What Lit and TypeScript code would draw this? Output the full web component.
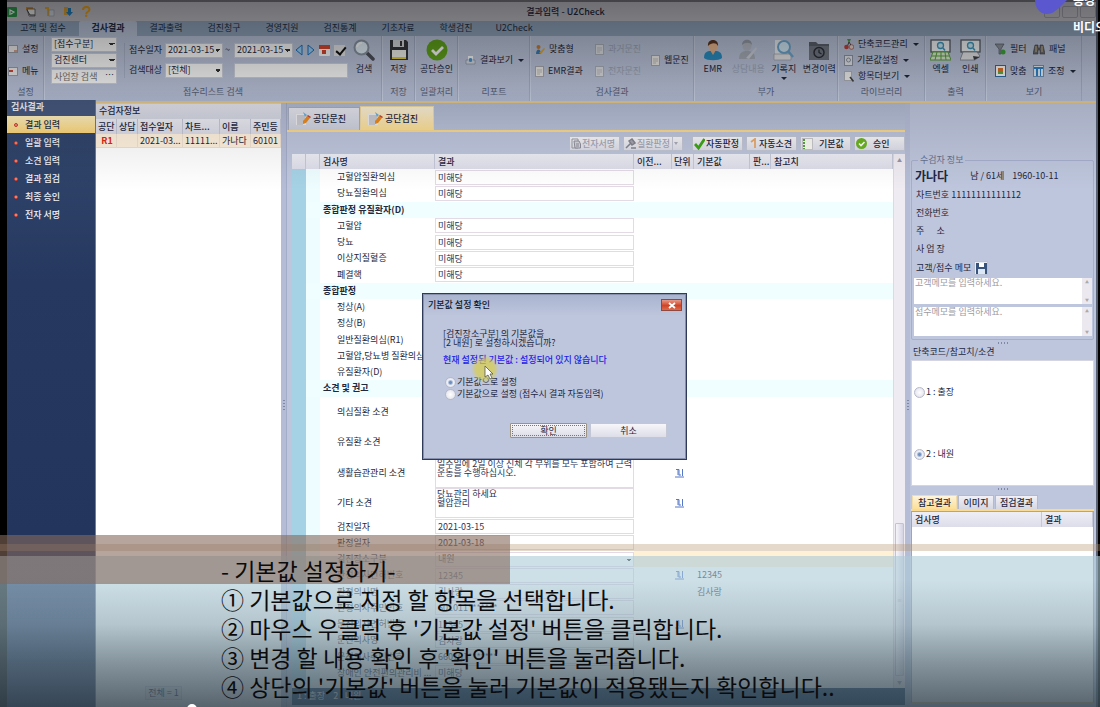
import { LitElement, html, css, svg, nothing } from "lit";
import { customElement } from "lit/decorators.js";
import { classMap } from "lit/directives/class-map.js";

type Row = {
  name: string;
  kind?: "section" | "tall" | "active";
  value?: string;
  link?: boolean;
  base?: string;
};

const ROWS: Row[] = [
  { name: "고혈압질환의심", value: "미해당" },
  { name: "당뇨질환의심", value: "미해당" },
  { name: "종합판정 유질환자(D)", kind: "section" },
  { name: "고혈압", value: "미해당" },
  { name: "당뇨", value: "미해당" },
  { name: "이상지질혈증", value: "미해당" },
  { name: "폐결핵", value: "미해당" },
  { name: "종합판정", kind: "section" },
  { name: "정상(A)", value: "" },
  { name: "정상(B)", value: "" },
  { name: "일반질환의심(R1)", value: "" },
  { name: "고혈압,당뇨병 질환의심", value: "" },
  { name: "유질환자(D)", value: "" },
  { name: "소견 및 권고", kind: "section" },
  { name: "의심질환 소견", kind: "tall", value: "" },
  { name: "유질환 소견", kind: "tall", value: "" },
  { name: "생활습관관리 소견", kind: "tall", value: "일주일에 2일 이상 신체 각 부위를 모두 포함하여 근력\n운동을 수행하십시오.", link: true },
  { name: "기타 소견", kind: "tall", value: "당뇨관리 하세요\n혈압관리", link: true },
  { name: "검진일자", value: "2021-03-15" },
  { name: "판정일자", value: "2021-03-18" },
  { name: "검진장소구분", kind: "active", value: "내원" },
  { name: "판정의사면허번호", value: "12345", link: true, base: "12345" },
  { name: "판정의사명", value: "김사랑", base: "김사랑" },
  { name: "판정의사주민번호", value: "601011*******" },
  { name: "문진의사면허번호", value: "12345", link: true },
  { name: "문진의사명", value: "김사랑" },
  { name: "문진의사주민번호", value: "660101*******" },
  { name: "장애인 안전편의관리비 ...", value: "미해당" },
];

const icon = (w: number, h: number, body: unknown, box = `0 0 ${w} ${h}`) =>
  html`<svg width=${w} height=${h} viewBox=${box} aria-hidden="true">${body}</svg>`;

const I = {
  app: icon(10, 10, svg`<rect width="10" height="10" rx="1" fill="#2c9a4b"/><path d="M3 8V3l4 2-3 2" fill="none" stroke="#fff" stroke-width="1.2"/>`),
  clip: icon(11, 11, svg`<path d="M1 1h7v3H1z" fill="#d98e26"/><path d="M2 3h8v7H4z" fill="#eee" stroke="#555" stroke-width=".8"/><path d="M2 4l3 5h5" fill="none" stroke="#444"/>`),
  ruler: icon(11, 11, svg`<path d="M1 1h4v9H3V3H1z" fill="#e2a72c"/><rect x="5" y="4" width="5" height="6" fill="#cfd6df" stroke="#8b96a6" stroke-width=".6"/>`),
  down: icon(10, 11, svg`<path d="M1 1h4v8H1z" fill="#e0a43a"/><path d="M5 2h3v4h2l-3.500 4L3 6h2z" fill="#1f7fc0"/>`),
  help: icon(10, 11, svg`<path d="M2 4c0-4 6.500-4 6.500-.5C8.500 6 5.200 5.500 5.200 8" fill="none" stroke="#f0a312" stroke-width="2"/><circle cx="5.200" cy="9.800" r="1.200" fill="#f0a312"/>`),
  panel: icon(10, 10, svg`<rect x=".5" y="1.500" width="9" height="7" fill="#f3f1f1" stroke="#9aa0ad"/><rect x="6" y="6" width="3" height="2" fill="#d8a48f"/>`),
  menu: icon(10, 10, svg`<rect x=".5" y="1.500" width="9" height="8" fill="#f3f1f1" stroke="#9aa0ad"/><rect x="1" y="4" width="4" height="2" fill="#cf4a3b"/>`),
  prev: icon(8, 12, svg`<path d="M7 1v10L1 6z" fill="#9bd1f5" stroke="#1d6fc0"/>`),
  next: icon(8, 12, svg`<path d="M1 1v10l6-5z" fill="#9bd1f5" stroke="#1d6fc0"/>`),
  cal: icon(11, 11, svg`<rect width="11" height="11" rx="1" fill="#fff"/><path d="M0 0h11v4H0z" fill="#d9472f"/><rect x="3" y="5" width="4" height="4" fill="#d9472f"/>`),
  search: icon(22, 22, svg`<path d="M13 13l7 7" stroke="#4c4f58" stroke-width="3.500" stroke-linecap="round"/><circle cx="8.500" cy="8.500" r="7" fill="#e4f2fb" stroke="#8a95a4" stroke-width="2"/><path d="M4 8a5 5 0 0 1 5-4" stroke="#fff" stroke-width="2" fill="none"/>`),
  save: icon(20, 22, svg`<path d="M1 1h16l2 2v18H1z" fill="#34363c"/><rect x="4" y="1" width="11" height="7" fill="#d6d9dd"/><rect x="11" y="2" width="2" height="5" fill="#34363c"/><rect x="3" y="11" width="14" height="9" fill="#f4f4ee"/><rect x="3" y="18" width="14" height="2" fill="#e5cf35"/>`),
  ok: icon(22, 22, svg`<circle cx="11" cy="11" r="10.500" fill="#62a51d"/><path d="M6 11l4 4 7-7" fill="none" stroke="#fff" stroke-width="2.800"/>`),
  report: icon(11, 10, svg`<path d="M1 5h9v4H1z" fill="#d9dde6" stroke="#8792a5" stroke-width=".7"/><path d="M3 1h5v5H3z" fill="#fff"/><circle cx="5.500" cy="5" r="2" fill="#4f94cf"/>`),
  person: icon(10, 11, svg`<circle cx="3.500" cy="3" r="2" fill="#c77f36"/><path d="M1 10c0-6 5-6 5 0z" fill="#3c7db8"/><path d="M4 9l5-5 1 1-4 5z" fill="#e4a935"/>`),
  doc: icon(9, 11, svg`<rect x=".5" y=".5" width="8" height="10" fill="#f1f0ee" stroke="#a9a9b0"/><path d="M2 4h5M2 6h5M2 8h3" stroke="#b9b3b0" stroke-width=".8"/>`),
  emr: icon(20, 22, svg`<path d="M1 19c0-7 4-7 9-7s9 0 9 7c-3 3-15 3-18 0z" fill="#2a8fc4"/><path d="M7 11h6l-3 5z" fill="#e9b187"/><ellipse cx="10" cy="7" rx="4.500" ry="5.500" fill="#eeb98f"/><path d="M5 7c-1-8 11-8 10 0-2-4-7-3-10 0z" fill="#5b3621"/>`),
  consult: icon(20, 22, svg`<path d="M1 20c0-7 4-8 8-8s8 1 8 8z" fill="#a3a6ae"/><ellipse cx="9" cy="6.500" rx="4.500" ry="5.500" fill="#b6b8be"/><path d="M4 6C4-1 14-1 14 6c-2-3-7-3-10 0z" fill="#878a93"/><path d="M8 19L18 8l1 2-8 10z" fill="#d9dade"/>`),
  record: icon(22, 22, svg`<path d="M2 1h10v14H2z" fill="#eef2f6"/><path d="M1 15h17v6H1z" fill="#e9e9ec" stroke="#9a9fab" stroke-width=".7"/><circle cx="11" cy="8" r="6" fill="#d5ecfa" stroke="#6fa8d0" stroke-width="2"/><path d="M15 12l5 6" stroke="#6fa8d0" stroke-width="2.500"/>`),
  history: icon(22, 22, svg`<path d="M1 3h7l2 2h11v16H1z" fill="#5c616c"/><rect x="1" y="7" width="20" height="14" rx="1" fill="#737985"/><circle cx="11" cy="13.500" r="5" fill="none" stroke="#2c2f37" stroke-width="1.500"/><path d="M11 10.500v3l2.500 1.500" fill="none" stroke="#2c2f37" stroke-width="1.300"/>`),
  tree: icon(10, 11, svg`<path d="M3 0h4l-2 4z" fill="#4c9c45"/><path d="M5 3L3 8M5 3l3 5" stroke="#444"/><circle cx="2.500" cy="8" r="2.300" fill="#c2413a"/><circle cx="7.500" cy="8" r="2.300" fill="#e4d8cd" stroke="#a33" stroke-width=".6"/>`),
  docS: icon(9, 11, svg`<rect x=".5" y=".5" width="8" height="10" fill="#e6e9ef" stroke="#8f96a3"/><circle cx="4.500" cy="5" r="2" fill="none" stroke="#8f96a3"/>`),
  docZ: icon(10, 11, svg`<rect x=".5" y=".5" width="7" height="9" fill="#f5f5f5" stroke="#b0b4bd"/><path d="M6 6l3.500 4.500" stroke="#444" stroke-width="1.600"/>`),
  excel: icon(21, 22, svg`<rect x="1" y="1" width="19" height="12" fill="#f6f8fa" stroke="#555b66" stroke-width="1.300"/><circle cx="10.500" cy="6.500" r="3" fill="#d4eef7" stroke="#3a9cc4" stroke-width="1.300"/><path d="M13 9l2 2.500" stroke="#3a9cc4" stroke-width="1.500"/><path d="M3 13h15l3 8H0z" fill="#dff0d5" stroke="#5ba13c" stroke-width="1"/><path d="M7 13l-2 8M11 13v8M15 13l1 8M2 17h17" stroke="#5ba13c"/>`),
  print: icon(21, 22, svg`<rect x="1" y="1" width="19" height="12" fill="#f6f8fa" stroke="#555b66" stroke-width="1.300"/><circle cx="10.500" cy="6.500" r="3" fill="#d4eef7" stroke="#3a9cc4" stroke-width="1.300"/><path d="M13 9l2 2.500" stroke="#3a9cc4" stroke-width="1.500"/><path d="M3 13h14l3 4-5 4H0z" fill="#e8e9ec" stroke="#777d88" stroke-width=".8"/><path d="M13 17l7 1-6 3z" fill="#3c3f46"/>`),
  filter: icon(11, 12, svg`<path d="M0 1h9L6 6v5H4V6z" fill="#8f949e" stroke="#555a64" stroke-width=".7"/><circle cx="8" cy="9" r="2.500" fill="#3fa63c"/>`),
  bino: icon(12, 11, svg`<path d="M2 1h3v3h2V1h3l2 9H7V6H5v4H0z" fill="#6b6c70" stroke="#3d3d42" stroke-width=".6"/><path d="M3 2v6M9 2v6" stroke="#d2b98c"/>`),
  fit: icon(11, 12, svg`<rect x=".5" y=".5" width="10" height="11" fill="#fff" stroke="#2f6fa8"/><rect x="3" y="3" width="5" height="3" fill="#e0752b"/><rect x="3" y="6" width="5" height="3" fill="#67ae43"/>`),
  adjust: icon(11, 12, svg`<rect x=".5" y=".5" width="10" height="11" fill="#eaf3fb" stroke="#6e95bd"/><path d="M1 2h9v2H1zM3 4h2v7H3zM7 4h1v7H7z" fill="#2f86d0"/>`),
  note: icon(16, 16, svg`<path d="M1 3h10v11H1z" fill="#efeff2"/><path d="M2 5h8M2 7h8M2 9h7M2 11h7M2 13h6" stroke="#a9a9b3"/><path d="M8 10l4-5 3 2-4 5-3 1z" fill="#ee8b1e"/><path d="M8 1l4 3-2 2z" fill="#6db4e4"/><path d="M12 5l1-1 3 2-1 1z" fill="#c8402b"/>`),
  sign: icon(10, 11, svg`<path d="M1 1h6v9H1z" fill="none" stroke="#9a9ba6"/><path d="M3 3h5l1.500 3v4H4z" fill="#d5d5de" stroke="#8e8f9b"/><path d="M5 6h3M5 8h3" stroke="#8e8f9b"/>`),
  gavel: icon(11, 11, svg`<path d="M1 10l5-5M4 3l3-2 3 4-3 2z" stroke="#83848f" stroke-width="1.500" fill="#a5a6b0"/><path d="M6 10h5" stroke="#83848f" stroke-width="1.500"/>`),
  check: icon(11, 12, svg`<path d="M1 6l3.500 4L10.500 1" fill="none" stroke="#3fa417" stroke-width="2.800"/>`),
  pen: icon(10, 11, svg`<path d="M3 4l4-3v9" fill="none" stroke="#e8a86b" stroke-width="1.800"/>`),
  list: icon(11, 12, svg`<rect x=".5" y=".5" width="10" height="11" fill="#fbfbf4" stroke="#c7c7cc"/><path d="M2 1v10" stroke="#5da046" stroke-width="2" stroke-dasharray="2 1"/>`),
  okS: icon(11, 11, svg`<circle cx="5.500" cy="5.500" r="5.500" fill="#6cb421"/><path d="M3 5.500l2 2 3.500-3.500" fill="none" stroke="#fff" stroke-width="1.600"/>`),
  disk: icon(11, 11, svg`<path d="M0 0h11v11H0z" fill="#39547c"/><path d="M3 0h5v4H3z" fill="#fff"/><path d="M2 6h7v5H2z" fill="#dce8f5"/>`),
  link: icon(9, 10, svg`<path d="M1 1.500h3v6M3 1v6M7.500 1v7M4 7h2M0 9h9" fill="none" stroke="#5578c8" stroke-width="1"/>`),
};

@customElement("app-root")
export class AppRoot extends LitElement {
  static styles = css`
    :host {
      display: block;
      position: relative;
      height: 100vh;
      overflow: hidden;
      background: #000;
      color: #1f2740;
      font: 9px/12px "Liberation Sans Narrow", "Noto Sans CJK KR", sans-serif;
    }
    * { box-sizing: border-box; }
    svg { display: block; flex: none; }
    button, input, select, textarea { font: inherit; color: inherit; margin: 0; border-radius: 0; }
    button { background: none; border: 0; padding: 0; display: flex; align-items: center; white-space: nowrap; }
    .window { height: 100%; display: flex; flex-direction: column; margin: 0 2px 0 7px; background: #bec6dd; border-right: 2px solid #5a6275; }

    .title { display: flex; align-items: center; height: 21px; flex: none; background: #c4c3cb; border-top: 2px solid #77777f; }
    .title h1 { flex: 1; margin: 0; padding-right: 2px; text-align: center; font-size: 9px; font-weight: 500; }
    .quick { display: flex; gap: 8px; align-items: center; width: 82px; }
    .quick i { width: 1px; height: 9px; background: #777; margin: 0 -4px; }
    .wbtns { display: flex; gap: 2px; width: 52px; }
    .wbtns span { width: 18px; height: 12px; border: 1px solid #a0a0aa; border-radius: 2px; }
    .tabs { display: flex; height: 15px; flex: none; background: #94a7c0; }
    .tabs a { width: 58px; line-height: 14px; text-align: center; color: #242f45; text-decoration: none; }
    .tabs a.first { width: 72px; }
    .tabs a.on { background: #bec8de; border-radius: 2px 2px 0 0; font-weight: 700; }

    .ribbon { display: flex; height: 65px; flex: none; background: linear-gradient(#bec8de, #bcc5dc 80%, #b6bfd9); }
    .group { display: flex; flex-direction: column; flex: none; border-right: 1px solid #a6b0c8; border-left: 1px solid #ccd4e6; }
    .group .in { flex: 1; display: flex; align-items: center; padding-bottom: 1px; }
    .group .cap { height: 16px; line-height: 13px; text-align: center; color: #59627a; }
    .g1 { width: 37px; } .g2 { width: 338px; } .g3 { width: 33px; } .g4 { width: 43px; } .g5 { width: 72px; }
    .g6 { width: 164px; } .g7 { width: 144px; } .g8 { width: 87px; } .g9 { width: 61px; } .g10 { width: 96px; }
    .col { display: flex; flex-direction: column; }
    .col.wide { gap: 10px; }
    .col.tight { gap: 4px; }
    .small { gap: 4px; height: 12px; }
    .off { color: #8f97ab; opacity: .7; }
    .big { flex-direction: column; gap: 2px; height: 46px; padding-top: 2px; line-height: 12px; justify-content: flex-start; }
    .big.fill { flex: 1; }
    .big.find1 { margin-left: 5px; }
    .dd::after { content: ""; border: 3px solid transparent; border-top-color: #222a3c; border-bottom: 0; margin-left: 1px; }
    .big.dd::after { margin: 0; }

    .box { appearance: none; background: #fff; border: 1px solid #d0d4df; height: 15px; padding: 0 2px; line-height: 12px; width: 100%; display: block; outline: 0; }
    select.box { background: linear-gradient(45deg, transparent 50%, #333 50%) no-repeat calc(100% - 4px) 5px / 3px 3px,
      linear-gradient(-45deg, transparent 50%, #333 50%) no-repeat calc(100% - 1px) 5px / 3px 3px, #fff; }
    .stack { display: flex; flex-direction: column; gap: 1px; width: 66px; margin-left: 6px; }
    .more { position: relative; }
    .more::after { content: "…"; position: absolute; right: 3px; top: 0; line-height: 12px; }
    .find { display: grid; grid-template-columns: 34px 58px 7px 59px auto; gap: 5px 2px; align-items: center; padding-left: 4px; margin-left: 7px; border-left: 1px solid #acb5cb; white-space: nowrap; }
    .find .wide { grid-column: 4 / 6; }
    .find .w2 { width: 114px; }
    .icons { display: flex; gap: 4px; align-items: center; }
    .icons input { appearance: none; width: 11px; height: 11px; background: #e9e9ec; position: relative; }
    .icons input:checked::after { content: ""; position: absolute; left: 4px; top: 0; width: 4px; height: 8px; border: solid #111; border-width: 0 2px 2px 0; rotate: 40deg; }
    .pad { padding-left: 6px; }
    .six { display: grid; grid-template-columns: 60px 56px auto; gap: 10px 0; padding-left: 4px; }
    .web { margin-top: -11px; height: 12px; }
    .lib { padding-left: 5px; }
    .view { display: grid; grid-template-columns: 38px auto; gap: 10px 0; padding-left: 8px; }

    .body { flex: 1; min-height: 0; display: flex; border-top: 2px solid #e8c98b; }
    nav { width: 89px; flex: none; margin-top: -3px; background: linear-gradient(#34496f, #26385f 30%, #22335b); color: #eef2fa; border-right: 1px solid #6d7ba5; }
    nav h2 { font-size: 9px; font-weight: 700; margin: 0; height: 16px; line-height: 14px; padding-left: 4px; background: #46597f; }
    nav a { display: flex; align-items: center; gap: 7px; height: 17px; margin-bottom: 1px; padding-left: 7px; color: inherit; text-decoration: none; font-weight: 500; }
    nav a::before { content: ""; width: 4px; height: 4px; border-radius: 50%; background: #f3a290; border: 1px solid #d43b2b; box-sizing: border-box; }
    nav a.on { background: linear-gradient(#fff0c0, #fbd67a); color: #2a3046; }

    .list { width: 185px; flex: none; background: #fff; display: flex; flex-direction: column; border-top: 1px solid #cfd4e3; overflow: hidden; }
    .list h2 { margin: 0; font-size: 9px; font-weight: 500; height: 15px; line-height: 13px; padding-left: 3px; background: linear-gradient(#e6e6ef, #d6d8e5); }
    table { border-collapse: separate; border-spacing: 0; table-layout: fixed; width: 100%; }
    th, td { padding: 0; text-align: left; font-weight: 400; white-space: nowrap; overflow: hidden; }
    th { height: 15px; line-height: 13px; font-weight: 500; background: linear-gradient(#eeeef6, #dcdde9); border-right: 1px solid #c5c8d8; padding-left: 3px; }
    .list th { padding-left: 2px; }
    .list td { height: 14px; line-height: 12px; background: #fff1dd; border-right: 1px solid #f0e2d4; border-bottom: 1px solid #eee0d6; padding-left: 2px; }
    .list .r1 { color: #e3260f; font-weight: 700; text-align: center; }
    .l1 { width: 21px; } .l3 { width: 45px; } .l4 { width: 37px; } .l5 { width: 31px; }
    .list footer { margin-top: auto; align-self: flex-start; margin-left: 49px; margin-bottom: 7px; width: 37px; height: 14px; line-height: 12px; text-align: center; background: #f4f4f8; border: 1px solid #dcdde6; }
    .split { width: 5px; flex: none; display: flex; flex-direction: column; justify-content: center; align-items: center; background: #b5bdd6; color: #7f89a5; }
    .dots { width: 2px; height: 10px; background: repeating-linear-gradient(currentColor 0 1px, transparent 1px 3px); }
    .dots.h { display: block; width: 10px; height: 2px; background: repeating-linear-gradient(90deg, currentColor 0 1px, transparent 1px 3px); margin: 0 auto; color: #7f89a5; }
    .gap { height: 6px; flex: none; padding-top: 2px; }

    main { flex: 1; min-width: 0; display: flex; flex-direction: column; border-left: 1px solid #a4adc8; }
    .dtabs { display: flex; align-items: flex-end; height: 29px; border-bottom: 2px solid #fbd98d; padding-left: 1px; background: linear-gradient(#b2bbd3, #b9c2da); }
    .dtabs button { width: 72px; height: 23px; gap: 2px; padding-left: 6px; background: linear-gradient(#e8e9f1, #cdd0de); border: 1px solid #a9afc4; border-bottom: 0; font-weight: 500; }
    .dtabs button.on { width: 74px; height: 24px; background: linear-gradient(#fdf4dc, #fddf95); border-color: #f0dba9; }
    .tools { display: flex; justify-content: flex-end; gap: 3px; height: 22px; padding: 4px 0 2px 0; }
    .btn { height: 15px; width: 51px; gap: 1px; padding-left: 1px; background: linear-gradient(#f6f6fa, #dcdde8); border: 1px solid #c3c6d4; border-radius: 1px; font-weight: 500; }
    .btn.sep { gap: 6px; }
    .btn.drop { width: 60px; margin-right: 6px; }
    .btn.drop i { align-self: stretch; display: flex; align-items: center; border-left: 1px solid #c3c6d4; margin-left: 1px; padding-left: 1px; }
    .btn.drop i::after { content: ""; border: 2px solid transparent; border-top: 3px solid #a9abb8; border-bottom: 0; }
    .btn.dis { color: #a4a6b5; }
    .grid { flex: 1; min-height: 0; display: flex; margin-left: 5px; background: #fff; }
    .sheet { flex: 1; min-width: 0; height: 100%; padding-bottom: 7px; }
    .sheet table { height: 100%; }
    .c0 { width: 14px; } .c1 { width: 14px; } .c2 { width: 115px; } .c3 { width: 199px; } .c4 { width: 38px; } .c5 { width: 22px; } .c6 { width: 56px; } .c7 { width: 21px; }
    th.c5 { padding-left: 2px; }
    .sheet td { height: 16px; line-height: 12px; }
    .sheet td.k0 { background: #a6d2e6; }
    .sheet td.k1 { background: #eefdff; }
    .sheet td.nm { padding-left: 17px; color: #23283a; }
    .sheet .section td:not(.k0) { background: #f0feff; }
    .sheet .section td.nm { padding-left: 3px; font-weight: 700; overflow: visible; }
    .sheet .tall td { height: 30px; }
    .sheet .active td.rest { background: #fff1d6; }
    .val { display: block; width: 100%; height: 15px; line-height: 12px; padding: 0 2px; border: 1px solid #e3dae6; background: #fff; outline: 0; resize: none; overflow: hidden; color: #2b3150; }
    .tall .val { height: 30px; line-height: 9px; padding: 0 1px; white-space: pre; }
    select.val { appearance: none; background: linear-gradient(45deg, transparent 50%, #333 50%) no-repeat calc(100% - 4px) 6px / 2px 2px,
      linear-gradient(-45deg, transparent 50%, #333 50%) no-repeat calc(100% - 2px) 6px / 2px 2px, #fff; }
    td.lk svg { margin-left: 3px; }
    td.bs { padding-left: 3px; }
    .bar { width: 12px; flex: none; display: flex; flex-direction: column; align-items: center; background: #efebf2; border-left: 1px solid #ddd9e4; font-size: 5px; color: #9496a5; }
    .bar .space { flex: 1; }
    .bar .thumb { width: 9px; height: 153px; background: linear-gradient(90deg, #f6f4fa, #d4d3e2); border: 1px solid #c2c2d2; border-radius: 1px; display: flex; align-items: center; justify-content: center; }
    .status { height: 17px; flex: none; margin: 0 0 2px 5px; padding-left: 5px; line-height: 15px; background: #0f3c66; color: #fff; white-space: pre; }

    aside { width: 186px; flex: none; display: flex; flex-direction: column; padding: 51px 2px 3px 1px; }
    fieldset { margin: 0; border: 1px solid #a5aecb; border-radius: 2px; padding: 0 9px 0 2px; min-width: 0; }
    legend { margin-left: 4px; padding: 0 2px; color: #66708c; line-height: 12px; }
    .who { display: flex; align-items: center; height: 20px; gap: 22px; padding-left: 1px; }
    .who b { font-size: 12px; }
    .who span + span { margin-left: -14px; }
    .info { height: 18px; line-height: 16px; white-space: pre; padding-left: 2px; display: flex; align-items: center; }
    .info.memoHead { height: 20px; }
    .info button { margin-left: 3px; width: 14px; height: 14px; justify-content: center; background: #e9edf5; border: 1px solid #b9c1d5; }
    .memo { display: block; width: 100%; height: 26px; border: 0; padding: 0 1px; line-height: 9px; resize: none; background: #fff; outline: 0; overflow-y: hidden; flex: 1; }
    .memo::placeholder { color: #9c9aa4; }
    .memoRow { display: flex; margin-bottom: 3px; width: 178px; }
    .memoRow.b .memo { height: 29px; }
    .sb { width: 10px; background: #ece8ef; display: flex; flex-direction: column; justify-content: space-between; align-items: center; font-size: 4px; color: #aaa; line-height: 8px; }
    aside h3 { margin: 0 0 2px 2px; font-size: 9px; font-weight: 400; line-height: 12px; }
    .codes { background: #fff; border: 1px solid #d4d5e0; height: 126px; flex: none; display: flex; flex-direction: column; justify-content: space-around; padding-left: 2px; }
    .radio { display: flex; align-items: center; gap: 1px; }
    .radio input { appearance: none; width: 11px; height: 11px; border-radius: 50%; border: 1px solid #b6b8ca; background: radial-gradient(#fff, #dcdce8); }
    .radio input:checked { background: radial-gradient(#6f8fc0 0 1px, #eef0f6 3px, #d6d8e6); }
    .rtabs { display: flex; gap: 1px; margin-top: 3px; border-bottom: 2px solid #fbd98d; flex: none; padding-left: 1px; }
    .rtabs button { height: 14px; width: 36px; justify-content: center; background: linear-gradient(#f0f0f6, #d5d7e3); border: 1px solid #b4b9cb; border-bottom: 0; font-weight: 500; }
    .rtabs button.x { width: 43px; }
    .rtabs button.on { width: 45px; background: linear-gradient(#fdf4dc, #fddf95); border-color: #f0dba9; }
    .res { flex: 1; background: #fff; border: 1px solid #9aa5c2; border-bottom: 2px solid #e8c98b; }
    .res .v { width: 51px; }

    .dialog { position: absolute; left: 422px; top: 293px; width: 265px; height: 167px; border: 1px solid #2e3a58; box-shadow: inset 0 0 0 1px #8791ad; padding: 1px; display: flex; flex-direction: column; background: linear-gradient(#a8b3cf, #bec6dd 22px); }
    .dialog header { display: flex; justify-content: space-between; align-items: center; height: 20px; padding: 0 3px 0 4px; font-weight: 500; color: #111727; }
    .close { width: 21px; height: 12px; justify-content: center; background: linear-gradient(#e79a88, #cf4528 55%, #dc6b4b); border: 1px solid #8d4a45; }
    .msg { margin: 14px 0 0 19px; line-height: 9px; font-size: 9px; }
    .msg p { margin: 0 0 7px; white-space: pre; }
    .msg .blue { color: #1d22e8; line-height: 12px; margin-bottom: 10px; font-weight: 500; }
    .msg .radio { height: 12px; padding-left: 2px; line-height: 12px; }
    .acts { display: flex; gap: 3px; justify-content: flex-end; margin: auto 18px 20px 0; }
    .acts .btn { width: 77px; justify-content: center; padding: 0; font-weight: 400; }
    .acts .btn.def { outline: 1px dotted #777; outline-offset: -3px; border: 1px solid #9d9382; }
    .halo { position: absolute; left: 471px; top: 355px; width: 28px; height: 28px; border-radius: 50%; background: radial-gradient(rgba(218, 206, 70, .7) 45%, rgba(218, 206, 70, 0) 71%); }
    .cursor { position: absolute; left: 484px; top: 365px; }

    .shade { position: absolute; inset: 0 0 auto 0; height: 190px; pointer-events: none; background: linear-gradient(rgba(0, 0, 0, .44), rgba(0, 0, 0, .28) 27%, rgba(0, 0, 0, .12) 54%, rgba(0, 0, 0, 0)); }
    .tint { position: absolute; inset: 556px 0 0 0; background: rgba(172, 202, 215, .6); }
    .stripe { position: absolute; left: 0; right: 0; top: 544px; height: 7px; background: rgba(180, 145, 110, .35); }
    .plate { position: absolute; left: 0; top: 535px; width: 510px; height: 49px; background: rgba(132, 105, 92, .6); }
    .fade { position: absolute; inset: 580px 0 0 0; background: linear-gradient(rgba(15, 25, 35, 0), rgba(15, 25, 35, .13) 35%, rgba(15, 25, 35, .38) 65%, rgba(15, 25, 35, .62)); }
    .captions { position: absolute; left: 221px; top: 556px; margin: 0; padding: 0; list-style: none; color: #0b0b0d; font: 400 23px/29px "Noto Sans CJK KR", sans-serif; white-space: nowrap; }
    .knob { position: absolute; left: 187px; top: 704px; width: 10px; height: 10px; border-radius: 50%; background: #fff; }
    .blob { position: absolute; left: 1034px; top: 0; }
    .vtitle { position: absolute; left: 1073px; top: -8px; color: #fff; font-size: 12px; line-height: 16px; white-space: nowrap; font-weight: 700; }
    .vtitle p { margin: 0 0 11px; }
  `;

  private field(label: string, value: string) {
    return html`<select class="box" aria-label=${label}><option>${value}</option></select>`;
  }

  private small(i: unknown, text: string, cls = "") {
    return html`<button class="small ${cls}">${i}<span>${text}</span></button>`;
  }

  private big(i: unknown, text: string, cls = "") {
    return html`<button class="big fill ${cls}">${i}<span>${text}</span></button>`;
  }

  private group(n: number, cap: string, body: unknown) {
    return html`<section class="group g${n}"><div class="in">${body}</div><div class="cap">${cap}</div></section>`;
  }

  private ribbon() {
    return html`<div class="ribbon">
      ${this.group(1, "설정", html`<div class="col wide">${this.small(I.panel, "설정")}${this.small(I.menu, "메뉴")}</div>`)}
      ${this.group(2, "접수리스트 검색", html`
        <div class="stack">
          ${this.field("접수구분", "[접수구분]")}${this.field("센터", "검진센터")}
          <div class="more"><input class="box" aria-label="사업장 검색" placeholder="사업장 검색"></div>
        </div>
        <div class="find">
          <span>접수일자</span>${this.field("시작일", "2021-03-15")}<span>~</span>${this.field("종료일", "2021-03-15")}
          <div class="icons">${I.prev}${I.next}${I.cal}<input type="checkbox" checked aria-label="기간 사용"></div>
          <span>검색대상</span>${this.field("검색대상", "[전체]")}<span></span>
          <div class="wide"><input class="box w2" aria-label="검색어"></div>
        </div>
        <button class="big find1">${I.search}<span>검색</span></button>`)}
      ${this.group(3, "저장", this.big(I.save, "저장"))}
      ${this.group(4, "일괄처리", this.big(I.ok, "공단승인"))}
      ${this.group(5, "리포트", html`<div class="col pad">${this.small(I.report, "결과보기", "dd")}</div>`)}
      ${this.group(6, "검사결과", html`<div class="six">
        ${this.small(I.person, "맞춤형")}${this.small(I.doc, "과거문진", "off")}<span></span>
        ${this.small(I.doc, "EMR결과")}${this.small(I.doc, "전자문진", "off")}
        <div class="web">${this.small(I.doc, "웹문진")}</div></div>`)}
      ${this.group(7, "부가", html`${this.big(I.emr, "EMR")}${this.big(I.consult, "상담내용", "off")}${this.big(I.record, "기록지", "dd")}${this.big(I.history, "변경이력")}`)}
      ${this.group(8, "라이브러리", html`<div class="col tight lib">
        ${this.small(I.tree, "단축코드관리", "dd")}${this.small(I.docS, "기본값설정", "dd")}${this.small(I.docZ, "항목더보기", "dd")}</div>`)}
      ${this.group(9, "출력", html`${this.big(I.excel, "엑셀")}${this.big(I.print, "인쇄")}`)}
      ${this.group(10, "보기", html`<div class="view">
        ${this.small(I.filter, "필터")}${this.small(I.bino, "패널")}${this.small(I.fit, "맞춤")}${this.small(I.adjust, "조정", "dd")}</div>`)}
    </div>`;
  }

  private valueCell(r: Row) {
    if (r.kind === "section") return nothing;
    if (r.kind === "tall") return html`<textarea class="val" aria-label=${r.name} .value=${r.value ?? ""}></textarea>`;
    if (r.kind === "active") return html`<select class="val" aria-label=${r.name}><option>${r.value}</option></select>`;
    return html`<input class="val" aria-label=${r.name} .value=${r.value ?? ""}>`;
  }

  private row(r: Row) {
    return html`<tr class=${classMap({ section: r.kind === "section", tall: r.kind === "tall", active: r.kind === "active" })}>
      <td class="k0"></td><td class="k1"></td><td class="nm">${r.name}</td><td>${this.valueCell(r)}</td>
      <td class="rest"></td><td class="rest lk">${r.link ? I.link : nothing}</td><td class="rest bs">${r.base ?? ""}</td>
      <td class="rest"></td><td class="rest"></td></tr>`;
  }

  private center() {
    return html`<main>
      <div class="dtabs"><button>${I.note}공단문진</button><button class="on">${I.note}공단검진</button></div>
      <div class="tools">
        <button class="btn dis">${I.sign}전자서명</button>
        <button class="btn drop dis">${I.gavel}질환판정<i></i></button>
        <button class="btn">${I.check}자동판정</button>
        <button class="btn">${I.pen}자동소견</button>
        <button class="btn sep">${I.list}기본값</button>
        <button class="btn sep">${I.okS}승인</button>
      </div>
      <div class="grid">
        <div class="sheet"><table>
          <thead><tr><th class="c0"></th><th class="c1"></th><th class="c2">검사명</th><th class="c3">결과</th><th class="c4">이전...</th>
            <th class="c5">단위</th><th class="c6">기본값</th><th class="c7">판...</th><th>참고치</th></tr></thead>
          <tbody>${ROWS.map((r) => this.row(r))}</tbody>
        </table></div>
        <div class="bar"><span>▲</span><span class="space"></span><span class="thumb">≡</span><span>▼</span></div>
      </div>
      <div class="status">1 : 출장    2 : 내원</div>
    </main>`;
  }

  private side() {
    const scroll = html`<span class="sb"><span>▲</span><span>▼</span></span>`;
    return html`<aside>
      <fieldset><legend>수검자 정보</legend>
        <div class="who"><b>가나다</b><span>남 / 61세</span><span>1960-10-11</span></div>
        <div class="info">차트번호 11111111111112</div>
        <div class="info">전화번호</div>
        <div class="info">주      소</div>
        <div class="info">사 업 장</div>
        <div class="info memoHead">고객/접수 메모<button aria-label="메모 저장">${I.disk}</button></div>
        <div class="memoRow"><textarea class="memo" aria-label="고객메모" placeholder="고객메모를 입력하세요."></textarea>${scroll}</div>
        <div class="memoRow b"><textarea class="memo" aria-label="접수메모" placeholder="접수메모를 입력하세요."></textarea>${scroll}</div>
      </fieldset>
      <div class="gap"><span class="dots h"></span></div>
      <h3>단축코드/참고치/소견</h3>
      <div class="codes">
        <label class="radio"><input type="radio" name="code">1 : 출장</label>
        <label class="radio"><input type="radio" name="code" checked>2 : 내원</label>
      </div>
      <div class="gap"><span class="dots h"></span></div>
      <div class="rtabs"><button class="on">참고결과</button><button>이미지</button><button class="x">점검결과</button></div>
      <div class="res"><table><thead><tr><th>검사명</th><th class="v">결과</th></tr></thead></table></div>
    </aside>`;
  }

  private dialog() {
    return html`<div class="dialog" role="dialog" aria-label="기본값 설정 확인">
        <header><span>기본값 설정 확인</span><button class="close" aria-label="닫기">${icon(8, 7, svg`<path d="M1 1l6 5M7 1L1 6" stroke="#fff" stroke-width="1.800"/>`)}</button></header>
        <div class="msg">
          <p>${"[검진장소구분] 의 기본값을\n[2 내원] 로 설정하시겠습니까?"}</p>
          <p class="blue">현재 설정된 기본값 : 설정되어 있지 않습니다</p>
          <label class="radio"><input type="radio" name="mode" checked>기본값으로 설정</label>
          <label class="radio"><input type="radio" name="mode">기본값으로 설정 (접수시 결과 자동입력)</label>
        </div>
        <div class="acts"><button class="btn def">확인</button><button class="btn">취소</button></div>
      </div>
      <div class="halo"></div>
      <div class="cursor">${icon(10, 15, svg`<path d="M1 1v11l3-2 2 4 2-1-2-4h3z" fill="#fff" stroke="#555" stroke-width=".8"/>`)}</div>`;
  }

  render() {
    return html`
      <div class="window">
        <div class="title">
          <div class="quick">${I.app}<i></i>${I.clip}${I.ruler}${I.down}${I.help}</div>
          <h1>결과입력 - U2Check</h1>
          <div class="wbtns"><span></span><span></span><span></span></div>
        </div>
        <div class="tabs">
          <a href="#" class="first">고객 및 접수</a><a href="#" class="on">검사결과</a>
          ${["결과출력", "검진청구", "경영지원", "검진통계", "기초자료", "학생검진", "U2Check"].map((t) => html`<a href="#">${t}</a>`)}
        </div>
        ${this.ribbon()}
        <div class="body">
          <nav><h2>검사결과</h2>
            ${["결과 입력", "일괄 입력", "소견 입력", "결과 점검", "최종 승인", "전자 서명"].map((t, i) => html`<a href="#" class=${i ? "" : "on"}>${t}</a>`)}
          </nav>
          <section class="list">
            <h2>수검자정보</h2>
            <table><thead><tr><th class="l1">공단</th><th class="l1">상담</th><th class="l3">접수일자</th><th class="l4">차트...</th><th class="l5">이름</th><th>주민등</th></tr></thead>
              <tbody><tr><td class="r1">R1</td><td></td><td>2021-03...</td><td>11111...</td><td>가나다</td><td>60101</td></tr></tbody></table>
            <footer>전체 = 1</footer>
          </section>
          <div class="split"><span class="dots"></span></div>
          ${this.center()}
          <div class="split"><span class="dots"></span></div>
          ${this.side()}
        </div>
      </div>
      ${this.dialog()}
      <div class="shade"></div>
      <div class="tint"></div>
      <div class="stripe"></div>
      <div class="plate"></div>
      <div class="fade"></div>
      <ul class="captions">
        <li>- 기본값 설정하기-</li>
        <li>① 기본값으로 지정 할 항목을 선택합니다.</li>
        <li>② 마우스 우클릭 후 '기본값 설정' 버튼을 클릭합니다.</li>
        <li>③ 변경 할 내용 확인 후 '확인' 버튼을 눌러줍니다.</li>
        <li>④ 상단의 '기본값' 버튼을 눌러 기본값이 적용됐는지 확인합니다..</li>
      </ul>
      <div class="knob"></div>
      <div class="blob">${icon(34, 14, svg`<path d="M1 0c0 8 5 14 12 14 5 0 8-3 12-6l8-8z" fill="#5a57cf"/>`)}</div>
      <div class="vtitle"><p>공경</p><p>비디오</p></div>
    `;
  }
}
